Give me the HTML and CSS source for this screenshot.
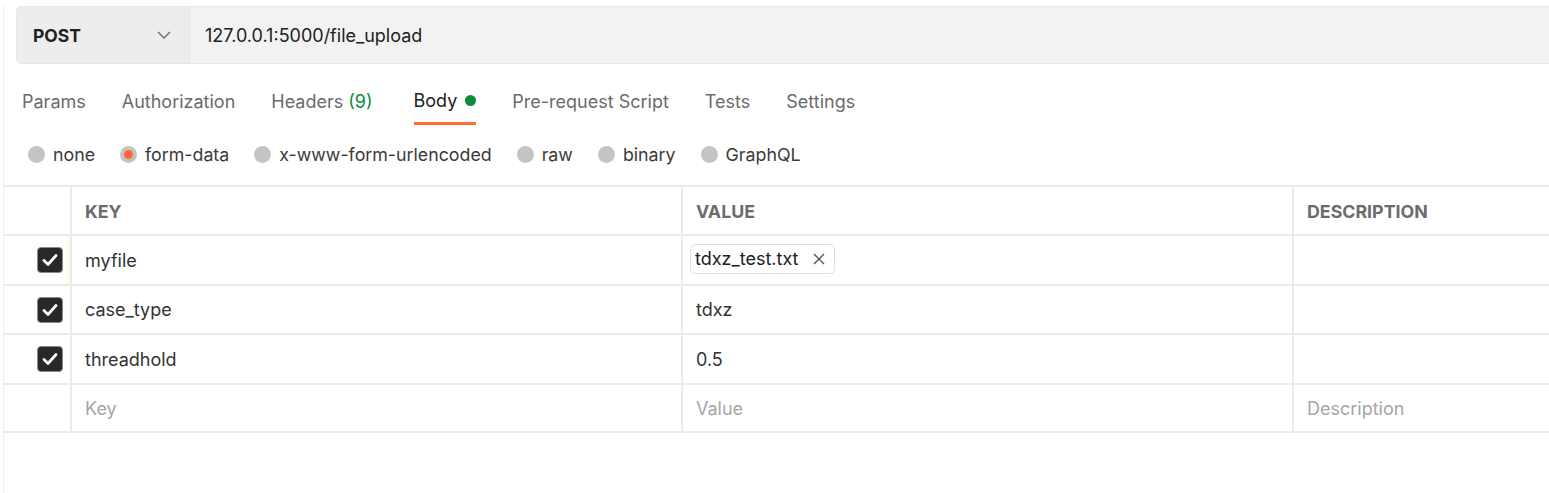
FILE: index.html
```html
<!DOCTYPE html>
<html>
<head>
<meta charset="utf-8">
<link rel="stylesheet" href="styles.css">
</head>
<body>
<div class="page">
  <div class="top">
    <div class="urlbar">
      <div class="method">
        <span class="method-name">POST</span>
        <svg class="chev" width="14" height="8" viewBox="0 0 14 8"><path d="M1 1 L7 7 L13 1" fill="none" stroke="#6b6b6b" stroke-width="1.4"/></svg>
      </div>
      <div class="url">127.0.0.1:5000/file_upload</div>
    </div>
    <div class="tabs">
      <div class="tab">Params</div>
      <div class="tab">Authorization</div>
      <div class="tab">Headers <span class="count">(9)</span></div>
      <div class="tab active">Body <span class="dot"></span></div>
      <div class="tab">Pre-request Script</div>
      <div class="tab">Tests</div>
      <div class="tab">Settings</div>
    </div>
    <div class="radios">
      <label class="radio"><span class="circle"></span>none</label>
      <label class="radio"><span class="circle on"></span>form-data</label>
      <label class="radio"><span class="circle"></span>x-www-form-urlencoded</label>
      <label class="radio"><span class="circle"></span>raw</label>
      <label class="radio"><span class="circle"></span>binary</label>
      <label class="radio"><span class="circle"></span>GraphQL</label>
    </div>
  </div>
  <div class="table">
    <div class="row head">
      <div class="cell chk"></div>
      <div class="cell col">KEY</div>
      <div class="cell col">VALUE</div>
      <div class="cell col">DESCRIPTION</div>
    </div>
    <div class="row r1">
      <div class="cell chk mark"><span class="box"><svg width="16" height="14" viewBox="0 0 16 14"><path d="M2 7.5 L6 11.5 L14 2.5" fill="none" stroke="#fff" stroke-width="2.8" stroke-linecap="round" stroke-linejoin="round"/></svg></span></div>
      <div class="cell col">myfile</div>
      <div class="cell col file-cell"><span class="chip">tdxz_test.txt<svg class="x" width="12" height="12" viewBox="0 0 12 12"><path d="M1 1 L11 11 M11 1 L1 11" fill="none" stroke="#555" stroke-width="1.4"/></svg></span></div>
      <div class="cell col"></div>
    </div>
    <div class="row r2">
      <div class="cell chk"><span class="box"><svg width="16" height="14" viewBox="0 0 16 14"><path d="M2 7.5 L6 11.5 L14 2.5" fill="none" stroke="#fff" stroke-width="2.8" stroke-linecap="round" stroke-linejoin="round"/></svg></span></div>
      <div class="cell col">case_type</div>
      <div class="cell col">tdxz</div>
      <div class="cell col"></div>
    </div>
    <div class="row r3">
      <div class="cell chk"><span class="box"><svg width="16" height="14" viewBox="0 0 16 14"><path d="M2 7.5 L6 11.5 L14 2.5" fill="none" stroke="#fff" stroke-width="2.8" stroke-linecap="round" stroke-linejoin="round"/></svg></span></div>
      <div class="cell col">threadhold</div>
      <div class="cell col">0.5</div>
      <div class="cell col"></div>
    </div>
    <div class="row r4">
      <div class="cell chk"></div>
      <div class="cell col ph">Key</div>
      <div class="cell col ph">Value</div>
      <div class="cell col ph">Description</div>
    </div>
  </div>
</div>
</body>
</html>
```
FILE: styles.css
```css
html, body {
  margin: 0;
  padding: 0;
  background: #fff;
  overflow: hidden;
}
body {
  font-family: Inter, "Noto Sans", sans-serif;
  color: #212121;
  width: 1549px;
  height: 493px;
}
.page {
  width: 1960px;
  height: 493px;
  margin-left: 3px;
  border-left: 1px solid #ededed;
}
.top {
  padding-left: 12px;
}
.urlbar {
  margin-top: 6px;
  height: 56px;
  display: flex;
  background: #f2f2f2;
  border: 1px solid #e6e6e6;
  border-radius: 5px;
}
.method {
  width: 173px;
  display: flex;
  align-items: center;
  justify-content: space-between;
  padding: 0 18px 0 16px;
  box-sizing: border-box;
  background: #ededed;
  border-right: 1px solid #e6e6e6;
  border-radius: 5px 0 0 5px;
}
.method-name {
  font-weight: 700;
  font-size: 17.5px;
  color: #212121;
}
.url {
  display: flex;
  align-items: center;
  padding-left: 15px;
  font-size: 18px;
  color: #212121;
}
.tabs {
  display: flex;
  gap: 36px;
  padding-left: 6px;
  margin-top: 15px;
  height: 45px;
}
.tab {
  font-size: 18px;
  color: #6b6b6b;
  display: flex;
  align-items: center;
  border-bottom: 2px solid transparent;
  white-space: nowrap;
  box-sizing: border-box;
  height: 46px;
}
.tab .count {
  color: #0c8c3c;
  margin-left: 5px;
}
.tab.active {
  color: #212121;
  border-bottom: 3px solid #ff6c37;
  margin-left: 5px;
}
.tab .dot {
  width: 11px;
  height: 11px;
  border-radius: 50%;
  background: #0c8c3c;
  margin-left: 8px;
}
.radios {
  display: flex;
  gap: 25px;
  height: 63px;
  align-items: center;
  padding-left: 12px;
  margin-top: -1px;
}
.radio {
  display: flex;
  align-items: center;
  font-size: 17.8px;
  color: #3a3a3a;
  gap: 8px;
}
.circle {
  width: 17px;
  height: 17px;
  border-radius: 50%;
  background: #c4c4c4;
  display: flex;
  align-items: center;
  justify-content: center;
}
.circle.on::after {
  content: "";
  width: 9px;
  height: 9px;
  border-radius: 50%;
  background: #ff6c37;
}
.table {
  margin-top: -1px;
  border-top: 2px solid #ebebeb;
}
.row {
  display: flex;
  height: 48px;
  border-bottom: 2px solid #ebebeb;
}
.row.head {
  height: 47px;
}
.row.r2 {
  height: 47px;
}
.row.r4 {
  height: 46px;
}
.cell {
  display: flex;
  align-items: center;
  font-size: 18px;
  color: #333;
  box-sizing: border-box;
}
.chk {
  width: 68px;
  justify-content: flex-end;
  padding-right: 7px;
  border-right: 2px solid #ebebeb;
}
.chk.mark {
  box-shadow: inset -3px 0 0 #fff9e6;
}
.col {
  width: 611px;
  padding-left: 13px;
  border-right: 2px solid #ebebeb;
}
.head .col {
  font-weight: 700;
  font-size: 17.8px;
  color: #6b6b6b;
  padding-top: 2px;
}
.ph {
  color: #a6a6a6;
}
.file-cell {
  padding-left: 7px;
}
.chip {
  display: flex;
  align-items: center;
  height: 28px;
  border: 1px solid #e0e0e0;
  border-radius: 5px;
  padding: 0 9px 0 4px;
  color: #212121;
  margin-top: -3px;
}
.chip .x {
  margin-left: 15px;
}
.box {
  width: 24px;
  height: 24px;
  border-radius: 4px;
  background: #282828;
  border: 1.5px solid #8a8a8a;
  display: flex;
  align-items: center;
  justify-content: center;
}
```
